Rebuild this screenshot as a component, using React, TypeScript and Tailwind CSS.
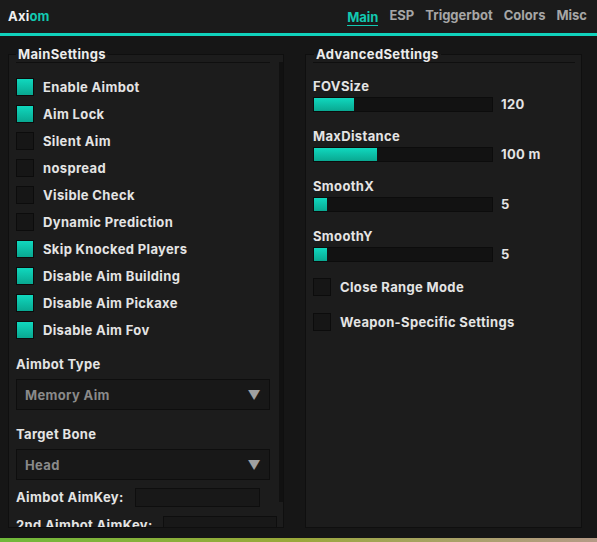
import React from 'react';

const FONT = { fontFamily: 'Inter, "Noto Sans", sans-serif' };

const mainToggles: { label: string; on: boolean }[] = [
  { label: 'Enable Aimbot', on: true },
  { label: 'Aim Lock', on: true },
  { label: 'Silent Aim', on: false },
  { label: 'nospread', on: false },
  { label: 'Visible Check', on: false },
  { label: 'Dynamic Prediction', on: false },
  { label: 'Skip Knocked Players', on: true },
  { label: 'Disable Aim Building', on: true },
  { label: 'Disable Aim Pickaxe', on: true },
  { label: 'Disable Aim Fov', on: true },
];

const sliders = [
  { label: 'FOVSize', fill: 40, value: '120' },
  { label: 'MaxDistance', fill: 63, value: '100 m' },
  { label: 'SmoothX', fill: 13, value: '5' },
  { label: 'SmoothY', fill: 13, value: '5' },
];

const tabs = ['Main', 'ESP', 'Triggerbot', 'Colors', 'Misc'];

function Checkbox({ on }: { on: boolean }) {
  return (
    <div
      className={
        on
          ? 'w-[18px] h-[18px] shrink-0 border border-[#0c0c0c] bg-gradient-to-b from-[#10d8be] to-[#09a891]'
          : 'w-[18px] h-[18px] shrink-0 border border-[#0c0c0c] bg-[#161616]'
      }
    />
  );
}

function Dropdown({ value }: { value: string }) {
  return (
    <div className="h-[31px] w-[254px] flex items-center justify-between pl-[8px] pr-[8px] bg-[#181818] border border-[#0e0e0e]">
      <span className="text-[13px] font-bold text-[#8a8a8a] leading-[16px]">{value}</span>
      <span className="text-[13px] text-[#a0a0a0] leading-[16px]">▼</span>
    </div>
  );
}

export default function App() {
  return (
    <div
      className="w-[597px] h-[542px] bg-[#161616] text-[#e4e4e4] flex flex-col overflow-hidden tracking-[0.35px]"
      style={FONT}
    >
      {/* top bar */}
      <div className="h-[33px] shrink-0 bg-[#1b1b1b] flex items-center justify-between pl-[8px] pr-[10px]">
        <div className="text-[13px] font-bold tracking-[0.2px]">
          <span className="text-[#f0f0f0]">Axi</span>
          <span className="text-[#12c9b1]">om</span>
        </div>
        <div className="flex gap-[11px] text-[13px] font-bold tracking-normal">
          {tabs.map((t) =>
            t === 'Main' ? (
              <span key={t} className="text-[#12c9b1] border-b border-[#12c9b1] leading-[16px] mt-[2px]">
                {t}
              </span>
            ) : (
              <span key={t} className="text-[#a6a6a6] leading-[16px]">
                {t}
              </span>
            )
          )}
        </div>
      </div>
      <div className="h-[3px] shrink-0 bg-[#10d2bc]" />

      {/* body */}
      <div className="flex-1 flex pt-[10px] pl-[8px] gap-[21px]">
        {/* main settings */}
        <fieldset className="w-[276px] min-w-0 h-[482px] shrink-0 border border-[#0f0f0f] bg-[#1c1c1c] flex flex-col">
          <legend className="ml-[7px] px-[2px] text-[13px] font-bold leading-[16px] text-[#ececec]">MainSettings</legend>
          <div className="flex flex-1 min-w-0 overflow-hidden">
            <div className="w-[270px] shrink-0 px-[7px] overflow-hidden">
              <div className="h-px bg-[#0f0f0f] w-[254px]" />
              <div className="flex flex-col gap-[9px] mt-[15px]">
                {mainToggles.map((t) => (
                  <div key={t.label} className="flex items-center gap-[9px]">
                    <Checkbox on={t.on} />
                    <span className="text-[13px] font-bold leading-[18px] whitespace-nowrap">{t.label}</span>
                  </div>
                ))}
              </div>
              <div className="mt-[17px] text-[13px] font-bold leading-[16px]">Aimbot Type</div>
              <div className="mt-[7px]">
                <Dropdown value="Memory Aim" />
              </div>
              <div className="mt-[16px] text-[13px] font-bold leading-[16px]">Target Bone</div>
              <div className="mt-[7px]">
                <Dropdown value="Head" />
              </div>
              <div className="mt-[8px] flex items-center">
                <span className="text-[13px] font-bold leading-[19px] w-[119px] shrink-0 whitespace-nowrap">Aimbot AimKey:</span>
                <div className="w-[125px] h-[19px] shrink-0 bg-[#181818] border border-[#0e0e0e]" />
              </div>
              <div className="mt-[9px] flex items-center">
                <span className="text-[13px] font-bold leading-[19px] w-[147px] shrink-0 whitespace-nowrap">2nd Aimbot AimKey:</span>
                <div className="w-[114px] h-[19px] shrink-0 bg-[#181818] border border-[#0e0e0e]" />
              </div>
            </div>
            <div className="w-[4px] h-[448px] shrink-0 bg-[#111111] -mt-[8px]" />
          </div>
        </fieldset>

        {/* advanced settings */}
        <fieldset className="w-[277px] min-w-0 h-[482px] shrink-0 border border-[#0f0f0f] bg-[#1c1c1c] pl-[7px] pr-[6px]">
          <legend className="ml-[1px] px-[2px] text-[13px] font-bold leading-[16px] text-[#ececec]">AdvancedSettings</legend>
          <div className="h-px bg-[#0f0f0f]" />
          <div className="flex flex-col gap-[16px] mt-[15px]">
            {sliders.map((s) => (
              <div key={s.label} className="flex flex-col gap-[3px]">
                <span className="text-[13px] font-bold leading-[16px]">{s.label}</span>
                <div className="flex items-center gap-[8px]">
                  <div className="w-[180px] h-[15px] bg-[#121212] border border-[#0c0c0c] flex">
                    <div
                      className="h-full bg-gradient-to-b from-[#10d8be] to-[#09a891]"
                      style={{ width: s.fill }}
                    />
                  </div>
                  <span className="text-[13px] font-bold leading-[15px]">{s.value}</span>
                </div>
              </div>
            ))}
          </div>
          <div className="flex flex-col gap-[17px] mt-[16px]">
            {['Close Range Mode', 'Weapon-Specific Settings'].map((l) => (
              <div key={l} className="flex items-center gap-[9px]">
                <Checkbox on={false} />
                <span className="text-[13px] font-bold leading-[18px]">{l}</span>
              </div>
            ))}
          </div>
        </fieldset>
      </div>

      {/* game backdrop peeking below */}
      <div className="h-[4px] shrink-0 bg-gradient-to-r from-[#6fb83a] via-[#9aa83a] to-[#b59a86]" />
    </div>
  );
}
